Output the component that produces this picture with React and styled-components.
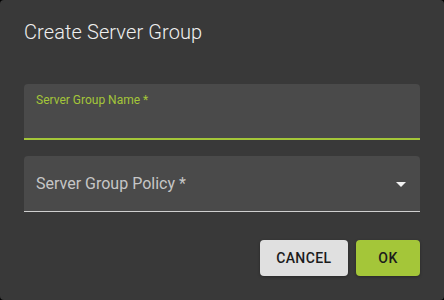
import React from "react";
import styled, { createGlobalStyle } from "styled-components";

const GlobalStyle = createGlobalStyle`
  html, body {
    margin: 0;
    padding: 0;
    background: #000;
  }
  * {
    box-sizing: border-box;
  }
`;

const Dialog = styled.div`
  width: 444px;
  height: 300px;
  background-color: #393939;
  border-radius: 4px;
  display: flex;
  flex-direction: column;
  font-family: Roboto, "Liberation Sans", sans-serif;
  overflow: hidden;
`;

const Title = styled.h2`
  margin: 0;
  padding: 16px 24px;
  font-size: 20px;
  font-weight: 300;
  line-height: 32px;
  letter-spacing: 0.1px;
  color: #f0f0f0;
`;

const Content = styled.div`
  padding: 20px 24px 0 24px;
  display: flex;
  flex-direction: column;
  gap: 16px;
`;

const Field = styled.div`
  height: 56px;
  background-color: #4a4a4a;
  border-radius: 4px 4px 0 0;
  border-bottom: ${(props) =>
    props.focused ? "2px solid #a4c639" : "1px solid #cfcfcf"};
  display: flex;
  flex-direction: ${(props) => (props.focused ? "column" : "row")};
  align-items: ${(props) => (props.focused ? "stretch" : "center")};
  padding: 0 7px 0 12px;
`;

const SmallLabel = styled.label`
  margin-top: 10px;
  font-size: 12px;
  line-height: 12px;
  color: #a4c639;
`;

const Input = styled.input`
  flex: 1;
  border: none;
  outline: none;
  background: transparent;
  color: #fff;
  font-family: inherit;
  font-size: 16px;
  padding: 0;
`;

const SelectLabel = styled.span`
  flex: 1;
  font-size: 16px;
  line-height: 16px;
  margin-top: 1px;
  color: #c6c6c6;
`;

const Arrow = styled.svg`
  width: 24px;
  height: 24px;
  fill: #f2f2f2;
`;

const Actions = styled.div`
  display: flex;
  justify-content: flex-end;
  gap: 8px;
  padding: 28px 24px 0 24px;
`;

const Button = styled.button`
  height: 36px;
  min-width: 64px;
  padding: 0 16.5px;
  border: none;
  border-radius: 4px;
  background-color: ${(props) => (props.primary ? "#a4c639" : "#e0e0e0")};
  color: #1c1c1c;
  font-family: inherit;
  font-size: 14px;
  font-weight: 500;
  letter-spacing: 0.4px;
  text-transform: uppercase;
  box-shadow: 0 1px 3px rgba(0, 0, 0, 0.3);
  cursor: pointer;
`;

export default function App() {
  return (
    <>
      <GlobalStyle />
      <Dialog>
        <Title>Create Server Group</Title>
        <Content>
          <Field focused>
            <SmallLabel htmlFor="groupname">Server Group Name *</SmallLabel>
            <Input id="groupname" type="text" />
          </Field>
          <Field>
            <SelectLabel>Server Group Policy *</SelectLabel>
            <Arrow viewBox="0 0 24 24">
              <path d="M7 10l5 5 5-5z" />
            </Arrow>
          </Field>
        </Content>
        <Actions>
          <Button>Cancel</Button>
          <Button primary>OK</Button>
        </Actions>
      </Dialog>
    </>
  );
}
